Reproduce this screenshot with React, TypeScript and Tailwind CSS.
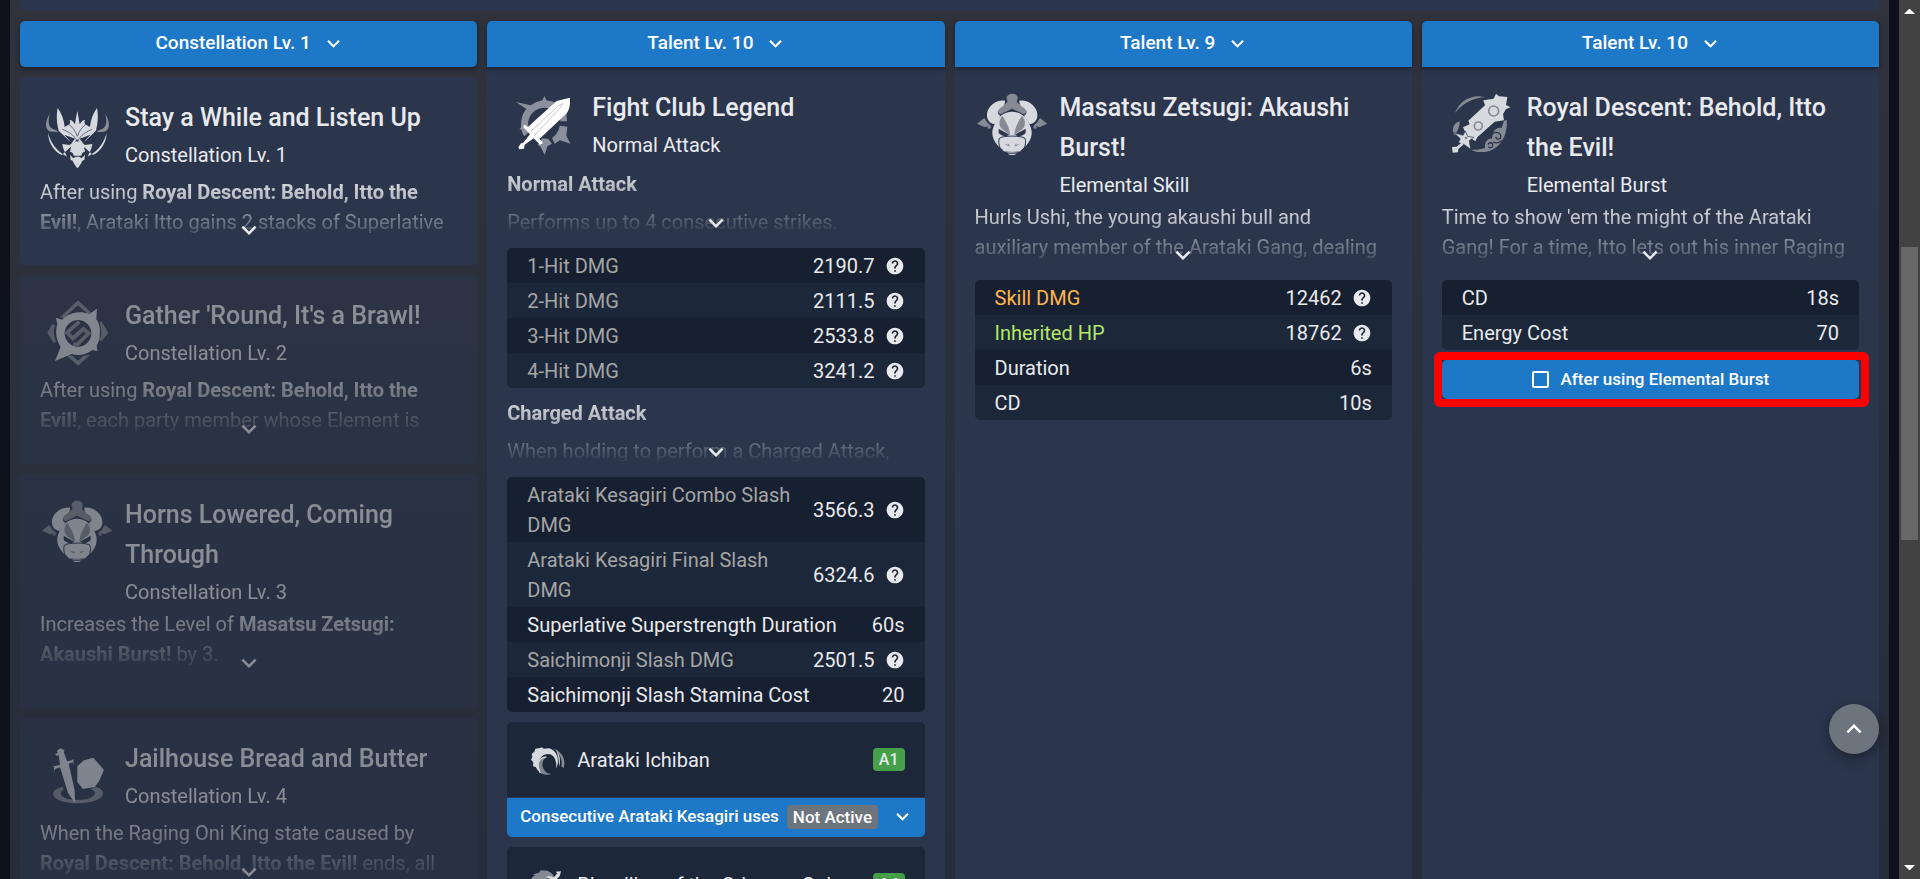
import React from "react";

type Row = { label: React.ReactNode; value: string; tone?: string; help?: boolean };

function ChevronDown({ className = "size-7" }: { className?: string }) {
  return (
    <svg viewBox="0 0 24 24" fill="currentColor" className={className} aria-hidden="true">
      <path d="M16.59 8.59 12 13.17 7.41 8.59 6 10l6 6 6-6z" />
    </svg>
  );
}

function HelpIcon() {
  return (
    <svg viewBox="0 0 24 24" fill="currentColor" className="size-5 shrink-0" aria-hidden="true">
      <path d="M12 2C6.48 2 2 6.48 2 12s4.48 10 10 10 10-4.48 10-10S17.52 2 12 2zm1 17h-2v-2h2v2zm2.07-7.75-.9.92C13.45 12.9 13 13.5 13 15h-2v-.5c0-1.1.45-2.1 1.17-2.83l1.24-1.26c.37-.36.59-.86.59-1.41 0-1.1-.9-2-2-2s-2 .9-2 2H8c0-2.21 1.79-4 4-4s4 1.79 4 4c0 .88-.36 1.68-.93 2.25z" />
    </svg>
  );
}

function OniMaskIcon() {
  return (
    <svg viewBox="120 291 225 225" className="size-[75px]" aria-hidden="true">
      <g fill="#8a8f9a">
        <path d="M150 341c-14 20-16 42-3 52 8 5 18 2 28 4-3-7-12-8-18-11-12-6-14-26-7-45z" />
        <path d="M315 341c14 20 16 42 3 52-8 5-18 2-28 4 3-7 12-8 18-11 12-6 14-26 7-45z" />
      </g>
      <g fill="#d6d9de">
        <path d="M173 324c-5 25-2 48 3 68l30 29 11 7-8 7-22-3c1 14 8 23 14 38-21-11-44-28-57-70 2 35 23 58 41 65l28-25 19-22 19 22 28 25c18-7 39-30 41-65-13 42-36 59-57 70 6-15 13-24 14-38l-22 3-8-7 11-7 30-29c5-20 8-43 3-68-12 17-19 35-21 57l-14-8c-4-6-3-10 0-14-8 1-13 7-17 14-3-20-5-30-7-40-2 10-4 20-7 40-4-7-9-13-17-14 3 4 4 8 0 14l-14 8c-2-22-9-40-21-57z" />
        <path d="m215 432-5 24c6-1 10 4 11 11h23c1-7 5-12 11-11l-5-24-17-10z" />
        <path d="m210 464 2 16c5 0 7 3 9 9l8 12c2 4 5 4 7 0l8-12c2-6 4-9 9-9l2-16-10 11-7-5h-11l-7 5z" />
      </g>
      <g fill="none" stroke="#2b364d" strokeWidth="2">
        <path d="M187 388c18 7 35 16 45 37 10-21 27-30 45-37" />
        <path d="M202 370c15 9 25 24 30 39 5-15 15-30 30-39" />
      </g>
      <path d="m193 404 32 12-10 13zM271 404l-32 12 10 13z" fill="#2b364d" />
    </svg>
  );
}

function BrawlIcon() {
  return (
    <svg viewBox="120 75 225 225" className="size-[75px]" aria-hidden="true">
      <g fill="#858a95">
        <path d="m234 91-54 51 12 2 42-38 28 25 13-2z" />
        <path d="m234 287-36-32 19 2 17 15 16-15 20-2z" />
        <path d="m157 163-15 25 18 30 8-3c-8-18-9-34-3-49z" />
        <path d="m303 152 22 36-20 26-6-3c6-17 5-35 0-52z" />
      </g>
      <path fill="#d6d9de" fillRule="evenodd" d="m291 116-2 32c9 12 13 30 10 48 1 12-3 22-9 30l2 17-15-3c-20 15-41 18-62 12l-50 21 17-42c-13-21-17-45-10-69l-4-19 18 6c25-23 54-27 82-17zm-57 34a40 40 0 1 0 0 80 40 40 0 0 0 0-80z" />
      <g fill="none" stroke="#858a95" strokeWidth="11">
        <path d="m238 155-37 33 17 17 27-25" />
        <path d="m220 222 12 1 34-33-16-13-28 26" />
      </g>
    </svg>
  );
}

function BullIcon() {
  return (
    <svg viewBox="105 261 225 225" className="size-[75px]" aria-hidden="true">
      <g fill="#858a95">
        <path d="m133 354-22 17 24 11 17-6-9-7z" />
        <path d="m300 354 22 17-24 11-17-6 9-7z" />
        <path d="m142 381 9-6 2 9-8 3zM291 381l-9-6-2 9 8 3z" />
        <path d="M203 304c-8-11 0-23 14-23s21 12 13 23c5 10 19 13 27 23 4 5 2 13-6 16l-35-17-34 17c-8-3-10-11-6-16 8-10 21-13 27-23z" />
      </g>
      <g fill="#d6d9de">
        <path d="M195 302c-28-3-51 17-54 39-2 19 10 31 24 31l16-24c-13-9-7-19 3-26 7-4 12-11 11-20z" />
        <path d="M238 302c28-3 51 17 54 39 2 19-10 31-24 31l-16-24c13-9 7-19-3-26-7-4-12-11-11-20z" />
        <path d="M216 335c-24 0-41 15-50 34-10 16-12 33-5 49 5 13 16 23 24 30 10 14 52 14 62 0 8-7 19-17 24-30 7-16 5-33-5-49-9-19-26-34-50-34z" />
      </g>
      <g fill="#858a95">
        <path d="M187 347c-11 15-12 28-2 39l25 19c-1-18-8-35-23-58z" />
        <path d="M246 347c11 15 12 28 2 39l-25 19c1-18 8-35 23-58z" />
      </g>
      <g fill="#2b364d">
        <path d="m176 386 32 18-9 5c-11 0-18-5-23-10z" />
        <path d="m257 386-32 18 9 5c11 0 18-5 23-10z" />
      </g>
      <path fill="none" stroke="#2b364d" strokeWidth="3" d="M178 415c10-9 67-9 77 0 3 9 2 18-2 28l-7 7M178 415c-3 9-2 18 2 28l7 7" />
      <path fill="none" stroke="#858a95" strokeWidth="3" d="m197 433 11 5-4-7M236 433l-11 5 4-7M192 454l24 3 25-3" />
      <path fill="#d6d9de" d="M203 461h27l-8 4h-12z" />
    </svg>
  );
}

function SwordShieldIcon() {
  return (
    <svg viewBox="120 594 225 225" className="size-[75px]" aria-hidden="true">
      <path fill="#858a95" fillRule="evenodd" d="M189 740c-22 5-32 14-29 25 5 16 37 25 75 25s71-12 74-27c2-12-8-18-22-23l-15 7c10 5 15 10 12 16-7 12-25 17-49 17-28 0-48-5-52-17-2-6 2-11 8-14z" />
      <g fill="#d6d9de">
        <path d="m181 625-10 7 2 7-8 3 6 6 5-2 4 28-18 5-1-7 1 20 5-6 13-4 24 77 21 31-1-39-18-80 12-4 2 8 1-19-5 5-15 3-10-29 3-4z" />
        <path d="m280 653-28 8-20 17v48l17 21 35-6 13-17 15-34z" />
      </g>
    </svg>
  );
}

function SwordIcon() {
  return (
    <svg viewBox="81 261 225 225" className="size-[75px]" aria-hidden="true">
      <g fill="#8b909c">
        <path fillRule="evenodd" d="m193 288 6 13c16 2 27 6 37 14l-17 15c-28-15-61-3-72 26-5 13-3 27 2 38l-16 15c-5-7-8-14-9-21l-6 1 5-8c0-22 4-41 16-54l-31-21 44 10c9-7 21-12 35-15z" />
        <path d="m259 332 2 32h-20c0-10-2-18-6-25z" />
        <path d="m239 377 23 3-3 27 12 24-31-10-16 10-8-17c12-9 20-20 23-37z" />
        <path d="m186 415 19 2 11 14-14 8-8 26-12-25-9-5z" />
      </g>
      <g fill="#fff">
        <path d="m270 293-40 10-89 80 23 24 15 9 82-77c10-16 9-30 9-46z" />
        <path d="m131 374 6 2 50 49 1 5-8 4-19-19-27 19-2 12-14 2-3-6 8-12 6-1 21-26-20-21z" />
      </g>
      <path fill="none" stroke="#a9adb6" strokeWidth="2" d="m151 395 84-77 13-8-8 14-76 82" />
    </svg>
  );
}

function ClubIcon() {
  return (
    <svg viewBox="126 261 225 225" className="size-[75px]" aria-hidden="true">
      <g fill="#858a95">
        <path d="M165 339c12-31 38-50 72-50l20 3c-37 1-69 18-92 47z" />
        <path d="M179 364c-22 7-25 28-14 43 6-16 15-23 14-43z" />
        <path d="M320 360c5 54-29 99-78 96-11 0-20-3-29-7 16 1 30 0 42-5-3-17 9-31 21-28 0-20 12-35 29-32l7-22z" />
      </g>
      <g fill="none" stroke="#2b364d" strokeWidth="4">
        <path d="M274 414c-1-11 8-19 19-16 11 2 12 16 4 19-7 2-11-3-8-7M264 434c3-9 15-7 14 2-1 8-10 9-13 4M279 426c9 5 20 2 26-5" />
      </g>
      <g fill="#d6d9de">
        <path d="m288 281-7 15-31 5 5 15-50 46 4 11-20 9 8 17-4 13 22 4 11 8 6-12 52-47 28-4-3-18 9-16 14-5-14-7 4-24-25-2z" />
        <path stroke="#2b364d" strokeWidth="2" d="m162 398 27 8 7-13 7 16 18 3-13 10 4 26-19-14-18-7 6-11z" />
        <path d="m186 427-16 13-14 1 2 17 16-1 1-10 15-13z" />
      </g>
      <g fill="none" stroke="#858a95" strokeWidth="5">
        <circle cx="281" cy="333" r="15" />
        <circle cx="235" cy="378" r="12" />
      </g>
      <circle cx="198" cy="414" r="4" fill="#858a95" />
    </svg>
  );
}

function WaveIcon() {
  return (
    <svg viewBox="141 598 120 120" className="size-10 shrink-0" aria-hidden="true">
      <path fill="#858a95" d="M220 623c26 10 39 35 31 59l-7-5c5-20-6-40-24-54z" />
      <path fill="#7d8490" d="M181 697c-14-21-8-44 17-47-14 12-15 31 2 46l15 5c-14 3-25 1-34-4z" />
      <path fill="#d6d9de" d="M228 684c14-27 1-55-20-61l-17 1-5-4-9 3-11 1-2 8-9 8 2 9-4 8 7 8-1 12 8 2 6 10 8 5c-14-28-1-53 24-54 16 0 27 20 23 44z" />
      <path fill="none" stroke="#d6d9de" strokeWidth="4" d="M181 697c-14-27-5-46 18-48" />
      <path fill="#d6d9de" d="m229 626 7 14c5 15 5 29 1 38 1-18-4-34-8-52z" />
    </svg>
  );
}

function BloodlineIcon() {
  return (
    <svg viewBox="141 972 120 120" className="size-10 shrink-0" aria-hidden="true">
      <path fill="#858a95" d="m155 1010 10-7-6-3 18-5 5-7 20 1 12 7 7 8-17 9-17 19-25 6-7-10z" />
      <path fill="#d6d9de" d="m226 992 17-1-4 15-30 30-20 25-9-8 29-27 9-9-20-9 8-3 17 2 9-10z" />
      <path fill="#858a95" d="M160 1030c-2 30 16 50 45 50 24 0 38-20 36-48-8 22-20 32-40 32-18 0-33-14-41-34z" />
    </svg>
  );
}

function LevelButton({ text, flat = false }: { text: string; flat?: boolean }) {
  return (
    <button
      type="button"
      className={
        "relative flex h-[46px] w-full items-center justify-center gap-2.5 bg-[#1e78c8] pb-0.5 text-[19px] font-medium text-white shadow-[0_2px_5px_rgba(0,0,0,0.4)] " +
        (flat ? "rounded-t-[5px]" : "rounded-[5px]")
      }
    >
      {text}
      <ChevronDown className="-mr-1 size-[25px]" />
    </button>
  );
}

function Header({ icon, title, subtitle }: { icon: React.ReactNode; title: string; subtitle: string }) {
  return (
    <header className="flex min-h-20 gap-2.5">
      <div className="size-[75px] shrink-0">{icon}</div>
      <div className="min-w-0 flex-1 pt-px">
        <h2 className="text-[25px] leading-10 font-medium">{title}</h2>
        <p className="leading-[34px]">{subtitle}</p>
      </div>
    </header>
  );
}

function Collapsed({ height, children }: { height: string; children: React.ReactNode }) {
  return (
    <button
      type="button"
      aria-label="Show full description"
      className={"relative flex w-full flex-col items-stretch justify-start text-left " + height}
    >
      <span className="block [mask-image:linear-gradient(to_bottom,rgba(0,0,0,0.95)_0px,rgba(0,0,0,0.75)_20px,transparent_68px)]">
        {children}
      </span>
      <span className="absolute bottom-2.5 left-1/2 -translate-x-1/2">
        <ChevronDown className="size-[30px]" />
      </span>
    </button>
  );
}

function Stats({ rows }: { rows: Row[] }) {
  return (
    <table className="block w-full overflow-hidden rounded-[5px]">
      <tbody className="block">
        {rows.map((row, i) => (
          <tr key={i} className="flex items-center gap-3 px-5 pt-[3px] pb-[2px] leading-[30px] odd:bg-[#172031] even:bg-[#1c273a]">
            <th scope="row" className={"min-w-0 flex-1 text-left font-normal " + (row.tone ?? "")}>
              {row.label}
            </th>
            <td className="flex shrink-0 items-center gap-2.5">
              {row.value}
              {row.help && <HelpIcon />}
            </td>
          </tr>
        ))}
      </tbody>
    </table>
  );
}

function Panel({ level, children }: { level: string; children: React.ReactNode }) {
  return (
    <section className="min-w-0 rounded-t-[5px] bg-[#2b364d]">
      <LevelButton text={level} flat />
      <div className="p-5">{children}</div>
    </section>
  );
}

function ConstellationCard({
  icon,
  title,
  level,
  height,
  dim = false,
  children,
}: {
  icon: React.ReactNode;
  title: string;
  level: number;
  height: string;
  dim?: boolean;
  children: React.ReactNode;
}) {
  return (
    <article className={"rounded-[5px] bg-[#2b364d] px-5 pt-5 pb-2.5 " + (dim ? "opacity-50" : "")}>
      <Header icon={icon} title={title} subtitle={"Constellation Lv. " + level} />
      <Collapsed height={height}>{children}</Collapsed>
    </article>
  );
}

function PassiveHeader({ icon, name, tag }: { icon: React.ReactNode; name: string; tag: string }) {
  return (
    <div className="flex h-[75px] items-center gap-2.5 px-5">
      {icon}
      <h3 className="flex-1 truncate">{name}</h3>
      <span className="rounded bg-[#46a049] px-[6px] text-base leading-[23px] font-medium">{tag}</span>
    </div>
  );
}

const gray = "text-[#a5a5a5]";

export default function App() {
  return (
    <div className="flex h-screen overflow-hidden bg-[#0e101c] font-[Roboto,sans-serif] text-[20px] text-[#e9eaed]">
      <main className="relative mx-2.5 min-w-0 flex-1 bg-linear-to-b from-[#30323c] via-[#29303c] to-[#262c3b] px-2.5">
        <div className="h-[11px] rounded-b-[5px] bg-[#2b364d]" />
        <div className="grid min-h-full grid-cols-4 gap-2.5 pt-2.5">
          <div className="flex min-w-0 flex-col gap-2.5">
            <LevelButton text="Constellation Lv. 1" />
            <ConstellationCard icon={<OniMaskIcon />} title="Stay a While and Listen Up" level={1} height="h-[78px]">
              After using <b>Royal Descent: Behold, Itto the Evil!</b>, Arataki Itto gains 2 stacks of Superlative
            </ConstellationCard>
            <ConstellationCard icon={<BrawlIcon />} title="Gather 'Round, It's a Brawl!" level={2} height="h-[79px]" dim>
              After using <b>Royal Descent: Behold, Itto the Evil!</b>, each party member whose Element is
            </ConstellationCard>
            <ConstellationCard icon={<BullIcon />} title="Horns Lowered, Coming Through" level={3} height="h-[79px] mb-2.5" dim>
              Increases the Level of <b>Masatsu Zetsugi: Akaushi Burst!</b> by 3.
            </ConstellationCard>
            <ConstellationCard icon={<SwordShieldIcon />} title="Jailhouse Bread and Butter" level={4} height="h-[79px]" dim>
              When the Raging Oni King state caused by <b>Royal Descent: Behold, Itto the Evil!</b> ends, all
            </ConstellationCard>
          </div>

          <Panel level="Talent Lv. 10">
            <Header icon={<SwordIcon />} title="Fight Club Legend" subtitle="Normal Attack" />
            <Collapsed height="h-[81px]">
              <b className="block leading-[35px]">Normal Attack</b>
              <span className="mt-[5px] block">Performs up to 4 consecutive strikes.</span>
            </Collapsed>
            <Stats
              rows={[
                { label: "1-Hit DMG", value: "2190.7", tone: gray, help: true },
                { label: "2-Hit DMG", value: "2111.5", tone: gray, help: true },
                { label: "3-Hit DMG", value: "2533.8", tone: gray, help: true },
                { label: "4-Hit DMG", value: "3241.2", tone: gray, help: true },
              ]}
            />
            <div className="mt-2">
              <Collapsed height="h-[81px]">
                <b className="block leading-[35px]">Charged Attack</b>
                <span className="mt-[5px] block">When holding to perform a Charged Attack,</span>
              </Collapsed>
            </div>
            <Stats
              rows={[
                { label: "Arataki Kesagiri Combo Slash DMG", value: "3566.3", tone: gray, help: true },
                { label: "Arataki Kesagiri Final Slash DMG", value: "6324.6", tone: gray, help: true },
                { label: "Superlative Superstrength Duration", value: "60s" },
                { label: "Saichimonji Slash DMG", value: "2501.5", tone: gray, help: true },
                { label: "Saichimonji Slash Stamina Cost", value: "20" },
              ]}
            />
            <article className="mt-2.5 overflow-hidden rounded-[5px] bg-[#1c273a]">
              <PassiveHeader icon={<WaveIcon />} name="Arataki Ichiban" tag="A1" />
              <button
                type="button"
                className="flex h-10 w-full items-center border-t border-[#2f3a4f] bg-[#1e78c8] pr-2.5 pb-0.5 pl-[13px] text-[17px] font-medium text-white"
              >
                <span>Consecutive Arataki Kesagiri uses</span>
                <span className="ml-2 rounded bg-[#6c757d] px-[6px] leading-6">Not Active</span>
                <ChevronDown className="ml-auto size-[25px]" />
              </button>
            </article>
            <article className="mt-2.5 rounded-[5px] bg-[#1c273a]">
              <PassiveHeader icon={<BloodlineIcon />} name="Bloodline of the Crimson Oni" tag="A4" />
            </article>
          </Panel>

          <Panel level="Talent Lv. 9">
            <Header icon={<BullIcon />} title="Masatsu Zetsugi: Akaushi Burst!" subtitle="Elemental Skill" />
            <Collapsed height="h-[78px]">
              Hurls Ushi, the young akaushi bull and
              <br />
              auxiliary member of the Arataki Gang, dealing
            </Collapsed>
            <Stats
              rows={[
                { label: "Skill DMG", value: "12462", tone: "text-[#ffb54d]", help: true },
                { label: "Inherited HP", value: "18762", tone: "text-[#b4e668]", help: true },
                { label: "Duration", value: "6s" },
                { label: "CD", value: "10s" },
              ]}
            />
          </Panel>

          <Panel level="Talent Lv. 10">
            <Header icon={<ClubIcon />} title="Royal Descent: Behold, Itto the Evil!" subtitle="Elemental Burst" />
            <Collapsed height="h-[78px]">
              Time to show 'em the might of the Arataki Gang! For a time, Itto lets out his inner Raging
            </Collapsed>
            <Stats
              rows={[
                { label: "CD", value: "18s" },
                { label: "Energy Cost", value: "70" },
              ]}
            />
            <div className="relative mt-2.5">
              <label className="flex h-[39px] items-center justify-center gap-3 rounded-[5px] bg-[#1e78c8] text-[17px] font-medium text-white">
                <input type="checkbox" className="size-[17px] appearance-none rounded-xs border-2 border-white checked:bg-white" />
                After using Elemental Burst
              </label>
              <div className="pointer-events-none absolute -inset-2 -right-2.5 rounded-md border-8 border-[#ff0000]" />
            </div>
          </Panel>
        </div>
        <button
          type="button"
          aria-label="Scroll to top"
          className="absolute right-2.5 bottom-[125px] flex size-[50px] items-center justify-center rounded-full bg-[#6c757d] text-white shadow-[0_4px_14px_rgba(0,0,0,0.4)]"
        >
          <ChevronDown className="size-[30px] rotate-180" />
        </button>
      </main>
      <div className="flex w-[21px] flex-col items-center justify-between bg-[#424242] text-white" aria-hidden="true">
        <svg viewBox="0 0 21 21" className="w-full" fill="currentColor">
          <path d="M10 9h1l5 5H5z" />
        </svg>
        <div className="flex w-full flex-1 flex-col items-center">
          <div className="h-[27%]" />
          <div className="h-[35%] w-[17px] bg-[#686868]" />
        </div>
        <svg viewBox="0 0 21 21" className="w-full" fill="currentColor">
          <path d="M10 12h1l5-5H5z" />
        </svg>
      </div>
    </div>
  );
}
